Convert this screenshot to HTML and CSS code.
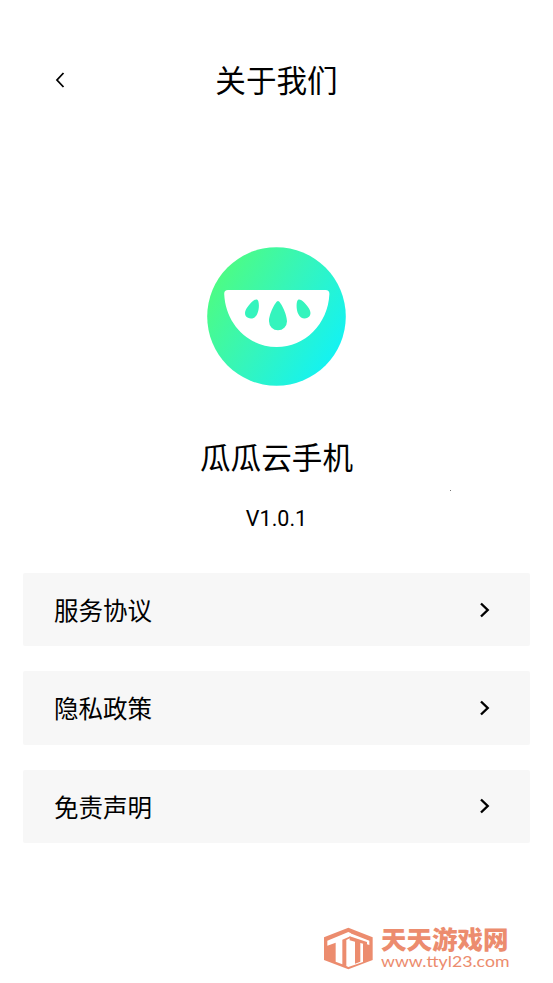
FILE: index.html
```html
<!DOCTYPE html>
<html lang="zh-CN">
<head>
<meta charset="utf-8">
<title>关于我们</title>
<link rel="stylesheet" href="styles.css">
</head>
<body>
<div class="page">
  <header class="header">
    <svg class="back" viewBox="0 0 12 18"><path d="M9.500 2 3 9l6.500 7"/></svg>
    <h1 class="title">关于我们</h1>
  </header>
  <main class="content">
    <svg class="logo" viewBox="0 0 139 139">
      <defs>
        <linearGradient id="melon" x1="0.05" y1="0.25" x2="0.92" y2="0.78">
          <stop offset="0" stop-color="#4dfc84"/>
          <stop offset="0.5" stop-color="#34f5bd"/>
          <stop offset="1" stop-color="#14f2f2"/>
        </linearGradient>
      </defs>
      <circle cx="69.500" cy="69.500" r="69.300" fill="url(#melon)"/>
      <path fill="#fff" d="M21 43h97.500q4 0 3.900 4C121 77 98 100 69.700 100S18.500 77 17.200 47q-.2-4 3.800-4z"/>
      <g class="seeds">
        <path d="M71 54c2.500 0 9 13 9 20.300a9 9 0 0 1-18 0c0-7.300 6.500-20.300 9-20.300z"/>
        <path d="M50 52.500c2.500 1 2.500 10 .2 14.500-2 4.500-6.200 5.500-9.200 3.800-3.500-1.800-3.800-5.300-1.500-9.300 2.500-4.300 8-10 10.500-9z"/>
        <path d="M91.500 52.500c-2.500 1-2.500 10-.2 14.500 2 4.500 6.200 5.500 9.200 3.800 3.500-1.800 3.800-5.300 1.500-9.300-2.500-4.300-8-10-10.500-9z"/>
      </g>
    </svg>
    <h2 class="name">瓜瓜云手机</h2>
    <p class="version">V1.0.1</p>
    <nav class="menu">
      <a class="item">服务协议<svg class="arrow" viewBox="0 0 12 18"><path d="m2 2.500 6.700 6.500L2 15.500"/></svg></a>
      <a class="item">隐私政策<svg class="arrow" viewBox="0 0 12 18"><path d="m2 2.500 6.700 6.500L2 15.500"/></svg></a>
      <a class="item">免责声明<svg class="arrow" viewBox="0 0 12 18"><path d="m2 2.500 6.700 6.500L2 15.500"/></svg></a>
    </nav>
  </main>
  <footer class="brand">
    <svg class="cube" viewBox="0 0 153 132">
      <path fill="#ec8c6e" d="M76 5 149 34v68l-73 28L3 102V34z"/>
      <path fill="#fff" d="M13 44 76 18l8 4v8L58 41v74l-20-8V50L13 59zM82 22l57 22v13l-19-6v57l-44 15-6-3V42l12-6z"/>
      <path fill="#ec8c6e" d="m80 31 52 17v8l-20-5v56l-16 6V47l-16-4z"/>
    </svg>
    <div class="brand-text">
      <span class="brand-name">天天游戏网</span>
      <span class="brand-url">www.ttyl23.com</span>
    </div>
  </footer>
  <i class="speck"></i>
</div>
</body>
</html>
```
FILE: styles.css
```css
* { box-sizing: border-box; }
body {
  margin: 0;
  background: #fff;
  color: #000;
  font-family: Roboto, "Noto Sans CJK SC", sans-serif;
}
.page {
  position: relative;
  width: 553px;
  height: 983px;
  display: flex;
  flex-direction: column;
  overflow: hidden;
}
.header {
  height: 160px;
  padding: 0 54px;
  display: grid;
  grid-template-columns: 12px 1fr 12px;
  align-items: center;
}
.back, .arrow {
  width: 12px;
  height: 18px;
  fill: none;
  stroke: #000;
  stroke-width: 1.8;
}
.arrow { stroke-width: 2.4; }
.title, .name {
  margin: 0;
  font-size: 30.6px;
  font-weight: 400;
  line-height: 44px;
  text-align: center;
}
.title { padding-top: 3px; }
.content {
  padding: 87px 23px 0;
  display: flex;
  flex-direction: column;
  align-items: center;
}
.logo { width: 139px; height: 139px; }
.seeds { fill: #34f4bd; }
.name { margin-top: 51px; }
.version {
  margin: 25px 0 0;
  font-size: 21.5px;
  line-height: 26px;
}
.menu {
  width: 100%;
  margin-top: 41px;
  display: flex;
  flex-direction: column;
  gap: 25px;
}
.item {
  height: 73.300px;
  padding: 0 39px 0 31px;
  display: flex;
  align-items: center;
  justify-content: space-between;
  background: #f7f7f7;
  border-radius: 2px;
  font-size: 24.500px;
}
.brand {
  margin: auto 44px 13px auto;
  display: flex;
  align-items: center;
  gap: 7px;
  color: #ec8c6e;
}
.cube { width: 51px; height: 44px; }
.brand-text {
  width: 128px;
  display: flex;
  flex-direction: column;
}
.brand-name {
  font-size: 25.500px;
  line-height: 25px;
  font-weight: 900;
  white-space: nowrap;
}
.brand-url {
  align-self: flex-start;
  font-family: Lato, sans-serif;
  font-size: 15px;
  line-height: 16px;
  transform: scaleX(1.18);
  transform-origin: 0 50%;
}
.speck {
  position: absolute;
  left: 450px;
  top: 490px;
  width: 1px;
  height: 1px;
  background: #777;
}
```
